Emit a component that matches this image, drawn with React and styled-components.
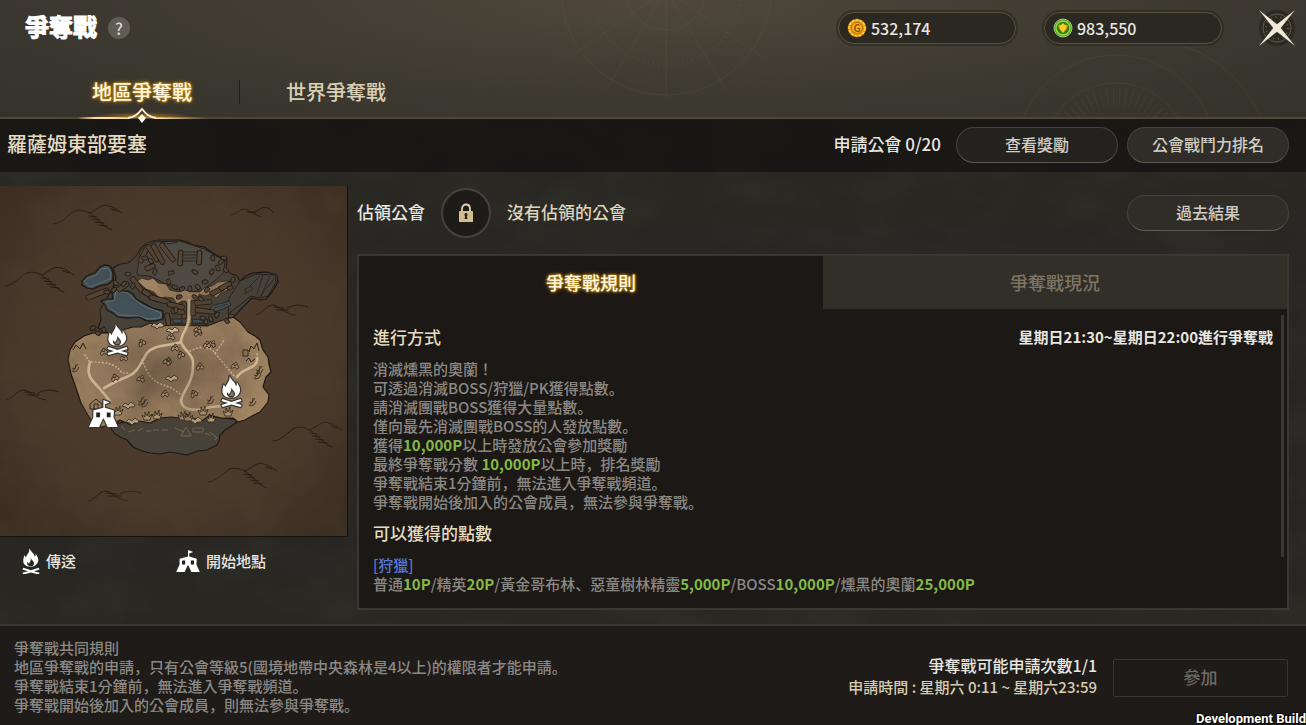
import React, { useState } from 'react';
import styled, { createGlobalStyle, css } from 'styled-components';

const GlobalStyle = createGlobalStyle`
    * {
        box-sizing: border-box;
    }

    body {
        margin: 0;
        background-color: #24231f;
        font-family: 'Noto Sans CJK KR', 'Noto Sans CJK JP', sans-serif;
        font-weight: 500;
        color: #e8e6e0;
    }

    button {
        font-family: inherit;
        font-weight: inherit;
        padding: 0;
        border: 0;
        background: none;
        cursor: pointer;
    }

    h1, h2, h3, p {
        margin: 0;
        font-weight: inherit;
    }
`

const Fire = () => (
    <>
        <path transform="scale(1 0.9)" fillRule="evenodd" d="M17 0C20 9 29 14 30 23C32 21 32 18 31 14C37 22 40 30 37 37C35 43 30 47 25 48L15 48C7 46 2 40 3 31C3 27 5 24 5 19C7 21 9 23 9 26C10 17 19 12 17 0ZM20 25C22 31 28 33 28 40C28 44 26 46 24 47L17 47C13 45 11 41 12 36C14 37 15 39 16 41C18 36 22 33 20 25Z" />
        <path d="M3 46L21 52L39 46L41 50L28 54L41 58L39 62L21 57L3 62L1 58L14 54L1 50Z" />
    </>
)

const Tent = () => (
    <>
        <path d="M30 0L43 5L33 9L33 16L52 22L51 36L60 56L39 56L31 39L29 39L21 56L0 56L9 36L9 22L30 16Z" />
        <path fill="#222" stroke="none" d="M15 26h8v10h-8zM37 26h8v10h-8z" />
    </>
)

const bigHill = 'M0 19C9 19 15 9 22 6C28 4 33 6 38 9C46 14 50 22 59 25M37 8C44 5 49 -2 56 1C61 2 64 5 69 8M36 11l8 1M39 14l8 1M42 17l9 1M46 20l8 1M58 4l6 2';
const flatHill = 'M0 11C7 9 10 1 17 1C23 2 27 9 39 11M31 4C37 1 44 0 52 3M18 3l10 1M20 6l12 0';

const hills = [
    { x: 53, y: 205, d: bigHill },
    { x: 5, y: 267, d: bigHill },
    { x: 273, y: 422, d: bigHill },
    { x: 208, y: 463, d: bigHill },
    { x: 231, y: 207, d: 'M0 8C6 7 8 2 14 2C19 4 23 7 30 10M24 5C30 2 34 -4 42 5M16 5l9 0' },
    { x: 256, y: 304, d: flatHill },
    { x: 7, y: 389, d: flatHill },
    { x: 89, y: 490, d: flatHill },
];

// loose stones over the plain
const stones = [
    [142, 343], [171, 337], [198, 333], [212, 344], [175, 348], [181, 355], [168, 361],
    [200, 367], [167, 362], [124, 358], [115, 378], [141, 379], [165, 394], [194, 394],
    [235, 366], [104, 352], [198, 330], [207, 345],
];
const paleStones = [[172, 378], [129, 405], [158, 325], [173, 330], [196, 420], [133, 421]];

// broken walls of the fortress: x, y, length, angle
const walls = [
    [140, 262, 18, -65], [148, 246, 18, 55], [153, 245, 21, 60], [161, 244, 21, 52], [146, 269, 9, -25],
    [180, 265, 14, -88], [199, 264, 13, -88], [132, 278, 17, 52], [143, 291, 18, 30],
    [150, 297, 20, 15], [87, 298, 22, -22], [118, 290, 12, -35], [184, 318, 16, -90],
    [193, 315, 14, -90], [195, 303, 16, -5], [168, 304, 16, 12], [167, 314, 11, 80],
    [211, 294, 14, -28], [220, 289, 12, -30], [172, 311, 12, 5], [196, 310, 18, 6],
];

const rubble = [
    [145, 258], [151, 261], [155, 272], [171, 273], [195, 272], [213, 258], [221, 262], [224, 258],
    [218, 268], [212, 272], [205, 282], [198, 287], [190, 289], [182, 289], [175, 287], [169, 282],
    [124, 284], [128, 274], [116, 283], [133, 286], [179, 297], [201, 299], [176, 310], [207, 290],
    [203, 318], [211, 319], [217, 315], [231, 316], [227, 321], [206, 322], [93, 328], [98, 333],
    [104, 330], [114, 290], [107, 292], [226, 270], [233, 280], [230, 288], [195, 297],
];

const tufts = [[147, 417], [157, 416], [183, 417], [188, 418], [203, 412], [211, 419], [228, 413], [118, 412]];
const darkTufts = [[141, 401], [75, 368], [252, 402], [257, 375], [210, 400], [144, 403], [259, 370]];

const TerritoryMap = () => (
    <MapSvg viewBox="0 186 348 351" role="img" aria-label="羅薩姆東部要塞">
        <defs>
            <radialGradient id="parchment" cx="50%" cy="48%" r="72%">
                <stop offset="0" stopColor="#503e2f" />
                <stop offset="0.6" stopColor="#49392b" />
                <stop offset="1" stopColor="#382b20" />
            </radialGradient>
            <radialGradient id="plain" cx="48%" cy="45%" r="62%">
                <stop offset="0" stopColor="#7c6650" />
                <stop offset="0.5" stopColor="#91775b" />
                <stop offset="1" stopColor="#a38762" />
            </radialGradient>
            <filter id="stain" x="0" y="0" width="100%" height="100%">
                <feTurbulence type="fractalNoise" baseFrequency="0.025" numOctaves="5" seed="7" />
                <feColorMatrix values="0 0 0 0 0.08  0 0 0 0 0.05  0 0 0 0 0.03  0 1.6 0 0 -0.62" />
            </filter>
        </defs>
        <rect x="0" y="186" width="348" height="351" fill="url(#parchment)" />

        <g fill="none" stroke="#211710" strokeWidth="0.9" strokeLinecap="round">
            {hills.map((hill, i) => <path key={i} d={hill.d} transform={`translate(${hill.x} ${hill.y})`} />)}
        </g>

        <g stroke="#1d1710" strokeWidth="1.2" strokeLinejoin="round">
            <path fill="#46423a" d="M98 328L101 320L100 310L108 296L113 288L116 278L113 268L120 264L128 263L133 259L137 255L140 249L147 243L153 241L160 240L180 240L187 242L193 245L204 247L213 253L220 257L227 261L226 268L230 273L237 276L240 281L246 276L253 273L267 272L277 275L278 282L272 292L266 299L260 300L252 298L246 304L240 310L233 318L220 328L110 334Z" />
            <path fill="#4f4c45" strokeWidth="0.8" d="M137 275L140 251L153 242L180 241L204 249L225 261L223 273L212 283L200 291L183 292L164 283L150 276Z" />
            <path fill="#46423a" strokeWidth="0.8" d="M240 281L256 274L275 275L276 282L268 296L260 298L251 296L240 305L228 314L229 298Z" />
            <path fill="#46423a" d="M109 425L114 433L120 437L127 440L133 447L142 451L150 453L160 454L170 452L187 455L198 451L207 450L217 445L219 441L220 435L225 430L233 425L239 420L180 412Z" />
            <path fill="url(#plain)" d="M68 360L70 350L75 342L84 336L93 333L110 333L122 330L133 327L141 327L150 323L162 326L173 325L207 326L220 321L233 317L240 322L248 332L255 336L260 340L263 350L268 357L269 364L271 372L266 377L263 387L269 395L268 402L260 412L252 416L245 420L238 422L233 418L221 418L210 415L202 421L193 418L180 418L171 417L160 418L150 423L140 421L131 425L120 420L111 425L101 427L91 420L86 412L81 403L76 388L71 374Z" />
        </g>

        <path fill="#a08462" stroke="#2b2118" strokeWidth="0.7" d="M137 281L142 278L148 280L153 278L158 283L166 284L170 290L178 292L184 290L193 292L200 292L204 288L212 286L218 282L227 281L230 285L228 290L221 293L216 298L211 294L205 296L199 294L198 300L192 301L191 326L186 326L187 303L182 301L177 304L173 298L165 297L160 299L154 292L146 289Z" />

        <g fill="#42525b" stroke="#1d1a15" strokeWidth="1.6" strokeLinejoin="round">
            <path d="M82 281L87 276L95 273L100 267L105 265L110 266L113 272L113 280L108 284L99 286L93 289L87 288L82 285Z" />
            <path d="M114 288L120 291L128 291L133 294L136 299L143 303L152 308L163 311L163 319L155 321L147 321L139 317L128 318L118 317L113 313L107 310L105 305L101 301L107 299L113 299L112 293Z" />
            <path d="M207 311L214 305L223 303L229 301L231 305L223 309L214 312ZM172 319L181 319L182 323L174 323ZM192 319L201 320L205 323L193 323Z" strokeWidth="0.8" />
        </g>
        <g fill="none" stroke="#71828a" strokeWidth="0.7">
            <path d="M84 281L88 278L96 275L101 269L108 268L111 273L110 279L98 284L90 287Z" />
            <path d="M116 291L127 293L133 298L142 305L161 313L160 318L148 319L139 316L119 315L110 308L106 302L114 301Z" />
        </g>

        <g fill="#554535" stroke="#1e160e" strokeWidth="0.9">
            {walls.map(([x, y, len, angle], i) => (
                <path key={i} transform={`translate(${x} ${y}) rotate(${angle})`} d={`M0 -2.5L${len} -2l1 2l-1 2.5L0 2.5l-1 -3Z`} />
            ))}
        </g>
        <g fill="#51483c" stroke="#1e160e" strokeWidth="0.9">
            {rubble.map(([x, y], i) => (
                <path key={i} transform={`translate(${x} ${y}) rotate(${(i * 53) % 180})`} d="M-3 -1L0 -2L3 -1L2 2L-1 2L-3 1Z" />
            ))}
        </g>
        <g fill="none" stroke="#262019" strokeWidth="0.8">
            <path d="M250 286L260 276M257 294L263 275M261 296L270 276M245 289l6 -3l2 3l-8 5zM259 298L274 279M160 241l8 3l10 -2M183 252h14M182 255h16M184 258h12M183 261h13M173 324h33M214 308l14 -4" />
            <path d="M128 432l7 -2M138 431l5 -3M146 431h5M153 430h6M162 430h6M175 428l9 4M193 428h10v4h-10zM181 436l5 -9l5 9zM210 432l7 6l-3 2M125 430l-3 -4M205 433l5 2" stroke="#85755f" />
            <path d="M90 409v-5l6 -5l6 5v5zM94 409v-5h4v5M243 356h5v-6h-5zM249 352l2 -6l3 3l3 -6l2 8M73 350l3 -5l4 4l3 -6l3 6M246 361l3 -3l2 4l4 -3" strokeWidth="1" />
        </g>

        <g fill="none" stroke="#cdb594" strokeWidth="2.6" strokeLinecap="round" strokeLinejoin="round">
            <path d="M189 300V317C189 328 181 333 181 342C184 351 193 354 193 362C194 384 182 391 181 401C182 412 200 411 211 407L223 406" />
            <path d="M181 342C166 347 155 344 147 353L140 365C135 376 125 377 115 382L104 388M90 362C85 377 94 382 100 389L110 401" />
            <path d="M237 377C243 367 259 369 257 358" />
            <g strokeWidth="1.6" strokeDasharray="0.5 3">
                <path d="M142 360C149 376 151 382 170 387L182 395M85 355L90 362C108 362 116 364 122 373L130 373M190 351C202 345 211 347 215 353L235 377M215 353L225 339M257 358V354" />
            </g>
        </g>

        <g fill="#a58d6e" stroke="#2a1f14" strokeWidth="0.8">
            {stones.map(([x, y], i) => (
                <path key={i} transform={`translate(${x} ${y}) rotate(${(i * 37) % 60 - 30})`} d="M-4 1L-2 -2L0 0L2 -2L4 1L2 3L0 1L-3 3ZM-1 -2L0 -4L2 -3" />
            ))}
        </g>
        <g fill="#c9b594" stroke="#3a2c1e" strokeWidth="0.9">
            {paleStones.map(([x, y], i) => (
                <path key={i} transform={`translate(${x} ${y})`} d="M-7 1L-4 -2L-1 0L2 -3L6 0L5 2L1 2L-1 4L-3 2Z" />
            ))}
        </g>
        <g fill="#b39a75" stroke="#2a1f14" strokeWidth="0.8">
            {tufts.map(([x, y], i) => (
                <path key={i} transform={`translate(${x} ${y})`} d="M-3 3L-5 -2L-2 0L-2 -5L0 -1L2 -6L2 0L5 -3L3 3Z" />
            ))}
        </g>
        <g fill="none" stroke="#3a2c1e" strokeWidth="0.9">
            {darkTufts.map(([x, y], i) => (
                <path key={i} transform={`translate(${x} ${y})`} d="M-3 4L3 -4M-3 0L0 1L1 -4M-2 4L2 3L4 -1" />
            ))}
        </g>

        <rect x="0" y="186" width="348" height="351" filter="url(#stain)" opacity="0.5" />
        <path d="M347.5 186V536.5H0" fill="none" stroke="#15110d" />

        <g fill="#fff" stroke="#3b3833" strokeWidth="5" strokeLinejoin="round" paintOrder="stroke">
            <g transform="translate(107 324) scale(0.5)"><Fire /></g>
            <g transform="translate(221 376) scale(0.5)"><Fire /></g>
            <g transform="translate(89 400) scale(0.48)"><Tent /></g>
        </g>
    </MapSvg>
)

const BackgroundArt = () => (
    <ArtSvg aria-hidden="true">
        <defs>
            <filter id="stone" x="0" y="0" width="100%" height="100%">
                <feTurbulence type="fractalNoise" baseFrequency="0.014 0.022" numOctaves="5" seed="3" />
                <feColorMatrix values="0 0 0 0 0.05  0 0 0 0 0.05  0 0 0 0 0.04  0 1.4 0 0 -0.55" />
            </filter>
        </defs>
        <rect width="100%" height="100%" filter="url(#stone)" opacity="0.35" />
    </ArtSvg>
)

const Dial = () => (
    <DialSvg viewBox="0 0 760 118" aria-hidden="true">
        <g fill="none" stroke="#7d704c" strokeOpacity="0.14">
            <circle cx="120" cy="-10" r="40" />
            <circle cx="120" cy="-10" r="75" strokeDasharray="1 4" strokeWidth="4" />
            <circle cx="120" cy="-10" r="105" />
            <path d="M120 -10L20 60M120 -10L60 90M120 -10L120 100M120 -10L180 90M120 -10L220 60" />
            <circle cx="570" cy="155" r="100" />
            <circle cx="570" cy="155" r="72" />
            <circle cx="570" cy="155" r="58" strokeDasharray="1 5" strokeWidth="18" />
            <path d="M620 42C670 50 700 85 715 118" />
        </g>
    </DialSvg>
)

const GoldCoin = () => (
    <Icon $w={20} viewBox="0 0 20 20" aria-hidden="true">
        <circle cx="10" cy="10" r="9" fill="#e59a12" stroke="#a95f05" />
        <circle cx="10" cy="10" r="8" fill="none" stroke="#ffd84f" strokeWidth="1.5" strokeDasharray="3 1" />
        <circle cx="10" cy="10" r="5.5" fill="#f7b522" stroke="#b86a08" />
        <text x="10" y="14" textAnchor="middle" fontSize="10" fontWeight="700" fill="#8f5104">G</text>
    </Icon>
)

const GuildCoin = () => (
    <Icon $w={20} viewBox="0 0 20 20" aria-hidden="true">
        <circle cx="10" cy="10" r="9" fill="#4b9a1d" stroke="#a9c98a" />
        <circle cx="10" cy="10" r="7" fill="none" stroke="#8fdc3b" strokeWidth="1.5" />
        <circle cx="10" cy="10" r="6" fill="#357c14" />
        <path d="M5.500 7L8 7L10 5L12 7L14.500 7L13.500 11L10 15L6.500 11Z" fill="#ffc928" stroke="#b98a0c" strokeWidth="0.6" />
    </Icon>
)

const tabs = ['地區爭奪戰', '世界爭奪戰'];

const commonRules = [
    '爭奪戰共同規則',
    '地區爭奪戰的申請，只有公會等級5(國境地帶中央森林是4以上)的權限者才能申請。',
    '爭奪戰結束1分鐘前，無法進入爭奪戰頻道。',
    '爭奪戰開始後加入的公會成員，則無法參與爭奪戰。',
];

const App = () => {

    const [tab, setTab] = useState(0);

    return (
        <Page>
            <GlobalStyle />
            <BackgroundArt />

            <Header>
                <Dial />
                <TopRow>
                    <Title>爭奪戰</Title>
                    <HelpBtn aria-label="說明">?</HelpBtn>
                    <Wallet>
                        <Currency><GoldCoin />532,174</Currency>
                        <Currency><GuildCoin />983,550</Currency>
                    </Wallet>
                    <CloseBtn aria-label="關閉">
                        <Icon $w={38} viewBox="0 0 38 38">
                            <circle cx="19" cy="19" r="18" fill="#2b2922" />
                            <circle cx="19" cy="19" r="14" fill="none" stroke="#6d6754" strokeWidth="0.8" />
                            <circle cx="19" cy="19" r="11" fill="none" stroke="#6d6754" strokeWidth="1.5" strokeDasharray="1 4" />
                            <path fill="#f1ead6" stroke="#1b1914" strokeWidth="0.4" d="M0 0L19 15L38 0L23 19L38 38L19 23L0 38L15 19Z" />
                        </Icon>
                    </CloseBtn>
                </TopRow>
                <Tabs>
                    {tabs.map((name, i) => (
                        <Tab key={name} $active={tab === i} onClick={() => setTab(i)}>
                            {name}
                            {tab === i &&
                                <TabMark viewBox="0 0 130 20" aria-hidden="true">
                                    <defs>
                                        <linearGradient id="beam">
                                            <stop offset="0" stopColor="#ffce73" stopOpacity="0" />
                                            <stop offset="0.35" stopColor="#ffe3a8" />
                                            <stop offset="0.65" stopColor="#ffe3a8" />
                                            <stop offset="1" stopColor="#ffce73" stopOpacity="0" />
                                        </linearGradient>
                                        <radialGradient id="glow" cx="50%" cy="100%" r="50%" fy="100%">
                                            <stop offset="0" stopColor="#d08a20" stopOpacity="0.9" />
                                            <stop offset="1" stopColor="#c98214" stopOpacity="0" />
                                        </radialGradient>
                                    </defs>
                                    <rect x="10" y="2" width="110" height="12" fill="url(#glow)" />
                                    <rect x="0" y="13" width="52" height="2" fill="url(#beam)" />
                                    <path d="M0 13.500H52V15H0ZM78 13.500H130V15H78Z" fill="url(#beam)" />
                                    <path d="M51 14C58 13 61 10 65 5C69 10 72 13 79 14" fill="none" stroke="#fff3cf" strokeWidth="2" />
                                    <path d="M65 10L69 14L65 19L61 14Z" fill="#fffbe8" />
                                </TabMark>
                            }
                        </Tab>
                    ))}
                </Tabs>
            </Header>

            <PlaceBar>
                <PlaceName>羅薩姆東部要塞</PlaceName>
                <Applied>申請公會 0/20</Applied>
                <PillBtn>查看獎勵</PillBtn>
                <PillBtn $raised>公會戰鬥力排名</PillBtn>
            </PlaceBar>

            <Main>
                <MapColumn>
                    <TerritoryMap />
                    <Legend>
                        <LegendItem>
                            <Icon $w={18} viewBox="0 0 42 62" fill="#fff"><Fire /></Icon>
                            傳送
                        </LegendItem>
                        <LegendItem>
                            <Icon $w={24} viewBox="0 0 60 56" fill="#fff"><Tent /></Icon>
                            開始地點
                        </LegendItem>
                    </Legend>
                </MapColumn>

                <Detail>
                    <OwnerRow>
                        <OwnerLabel>佔領公會</OwnerLabel>
                        <Emblem>
                            <Icon $w={16} viewBox="0 0 16 20" aria-hidden="true">
                                <path d="M4 9V6C4 0 12 0 12 6V9" fill="none" stroke="#e6d5ae" strokeWidth="1.8" />
                                <rect x="1" y="8" width="14" height="11" rx="0.5" fill="#d3be91" />
                                <path d="M8 10a1.700 1.700 0 0 1 1 3l.4 3h-2.800l.4-3a1.700 1.700 0 0 1 1-3" fill="#2a231a" />
                            </Icon>
                        </Emblem>
                        <OwnerName>沒有佔領的公會</OwnerName>
                        <PillBtn $raised>過去結果</PillBtn>
                    </OwnerRow>

                    <Panel>
                        <PanelTabs>
                            <PanelTab $active>爭奪戰規則</PanelTab>
                            <PanelTab>爭奪戰現況</PanelTab>
                        </PanelTabs>
                        <PanelBody>
                            <Rules>
                                <RuleHead>
                                    <RuleTitle>進行方式</RuleTitle>
                                    <Schedule>星期日21:30~星期日22:00進行爭奪戰</Schedule>
                                </RuleHead>
                                <RuleText>
                                    <p>消滅燻黑的奧蘭！</p>
                                    <p>可透過消滅BOSS/狩獵/PK獲得點數。</p>
                                    <p>請消滅團戰BOSS獲得大量點數。</p>
                                    <p>僅向最先消滅團戰BOSS的人發放點數。</p>
                                    <p>獲得<Points>10,000P</Points>以上時發放公會參加獎勵</p>
                                    <p>最終爭奪戰分數 <Points>10,000P</Points>以上時，排名獎勵</p>
                                    <p>爭奪戰結束1分鐘前，無法進入爭奪戰頻道。</p>
                                    <p>爭奪戰開始後加入的公會成員，無法參與爭奪戰。</p>
                                </RuleText>
                                <RuleHead>
                                    <RuleTitle>可以獲得的點數</RuleTitle>
                                </RuleHead>
                                <RuleText>
                                    <Category>[狩獵]</Category>
                                    <p>
                                        普通<Points>10P</Points>/精英<Points>20P</Points>/黃金哥布林、惡童樹林精靈<Points>5,000P</Points>/BOSS<Points>10,000P</Points>/燻黑的奧蘭<Points>25,000P</Points>
                                    </p>
                                </RuleText>
                            </Rules>
                            <ScrollTrack />
                        </PanelBody>
                    </Panel>
                </Detail>
            </Main>

            <Footer>
                <CommonRules>
                    {commonRules.map((rule) => <p key={rule}>{rule}</p>)}
                </CommonRules>
                <ApplyInfo>
                    <ApplyCount>爭奪戰可能申請次數1/1</ApplyCount>
                    <ApplyTime>申請時間 : 星期六 0:11 ~ 星期六23:59</ApplyTime>
                </ApplyInfo>
                <JoinBtn disabled>參加</JoinBtn>
            </Footer>

            <BuildTag>Development Build</BuildTag>
        </Page>
    )
}

export default App;


const glowText = css`
    color: #fff6dc;
    text-shadow: 0 0 2px #c08a1c, 0 0 3px #c08a1c, 0 0 5px #a87413;
`

const Page = styled.div`
    position: relative;
    display: flex;
    flex-direction: column;
    min-height: 100vh;
    background: linear-gradient(#292823, #272622 60%, #2a2823);
`

const ArtSvg = styled.svg`
    position: absolute;
    inset: 0;
    width: 100%;
    height: 100%;
    pointer-events: none;
`

const DialSvg = styled.svg`
    position: absolute;
    right: 0;
    top: 0;
    width: 760px;
    height: 118px;
    pointer-events: none;
`

const Icon = styled.svg`
    flex: none;
    display: block;
    width: ${(props) => props.$w}px;
`

const Header = styled.header`
    position: relative;
    z-index: 1;
    background: radial-gradient(ellipse at 50% 0, rgba(82, 75, 62, 0.9), rgba(64, 60, 50, 0.9) 55%, rgba(54, 51, 43, 0.9));
    border-bottom: 2px solid #4d4838;
`

const TopRow = styled.div`
    position: relative;
    display: flex;
    align-items: center;
    height: 56px;
    padding: 0 10px 0 25px;
`

const Title = styled.h1`
    font-size: 24px;
    line-height: 52px;
    font-weight: 700;
    color: #fff;
    align-self: flex-start;
    -webkit-text-stroke: 1px #fff;
`

const HelpBtn = styled.button`
    width: 22px;
    height: 22px;
    margin-left: 11px;
    border-radius: 50%;
    background-color: #5f5c53;
    color: #d8d6cf;
    font-size: 16px;
    line-height: 22px;
`

const Wallet = styled.div`
    display: flex;
    gap: 28px;
    margin-left: auto;
`

const Currency = styled.div`
    display: flex;
    align-items: center;
    gap: 4px;
    width: 178px;
    height: 32px;
    padding-left: 8px;
    border: 1px solid #5b523c;
    border-radius: 16px;
    background-color: #2b2821;
    box-shadow: 0 0 0 2px rgba(36, 33, 26, 0.5);
    font-size: 16px;
`

const CloseBtn = styled.button`
    margin-left: 36px;
`

const Tabs = styled.nav`
    position: relative;
    display: flex;
    height: 61px;
    padding-left: 45px;
`

const Tab = styled.button`
    position: relative;
    width: 194px;
    padding-top: 9px;
    font-size: 20px;
    color: #d9d0b6;

    & + & {
        background: linear-gradient(#1e1c17, #1e1c17) 0 24px / 1px 24px no-repeat;
    }

    ${(props) => props.$active && glowText}
`

const TabMark = styled.svg`
    position: absolute;
    left: 32px;
    bottom: -7px;
    width: 130px;
    height: 20px;
`

const PlaceBar = styled.div`
    position: relative;
    display: flex;
    align-items: center;
    gap: 9px;
    height: 53px;
    padding: 0 17px 2px 7px;
    background-color: rgba(23, 22, 20, 0.9);
`

const PlaceName = styled.h2`
    margin-right: auto;
    padding-bottom: 2px;
    font-size: 20px;
    color: #e3dac0;
`

const Applied = styled.span`
    margin-right: 6px;
    padding-bottom: 2px;
    font-size: 17px;
`

const PillBtn = styled.button`
    width: 162px;
    height: 36px;
    padding-bottom: 2px;
    border: 1px solid #45423b;
    border-bottom-color: #5d5a51;
    border-radius: 18px;
    background-color: ${(props) => props.$raised ? '#302d28' : '#24221e'};
    color: #cfcdc6;
    font-size: 16px;
`

const Main = styled.main`
    position: relative;
    display: flex;
    gap: 9px;
    flex: 1;
    padding: 14px 17px 14px 0;
`

const MapColumn = styled.section`
    flex: 0 0 348px;
`

const MapSvg = styled.svg`
    display: block;
    width: 100%;
`

const Legend = styled.div`
    display: grid;
    grid-template-columns: 154px 1fr;
    padding: 9px 0 0 22px;
`

const LegendItem = styled.div`
    display: flex;
    align-items: center;
    gap: 6px;
    height: 30px;
    font-size: 15px;
    line-height: 20px;
`

const Detail = styled.section`
    flex: 1;
    min-width: 0;
    display: flex;
    flex-direction: column;
    gap: 14px;
`

const OwnerRow = styled.div`
    display: flex;
    align-items: center;
    gap: 16px;
    height: 54px;
    font-size: 17px;
`

const OwnerLabel = styled.span`
    padding-bottom: 4px;
`

const Emblem = styled.div`
    display: flex;
    align-items: center;
    justify-content: center;
    width: 50px;
    height: 50px;
    border: 2px solid #45433d;
    border-radius: 50%;
    background-color: #1e1c19;
`

const OwnerName = styled(OwnerLabel)`
    margin-right: auto;
    color: #ddd4bb;
`

const Panel = styled.div`
    flex: 1;
    display: flex;
    flex-direction: column;
    border: 2px solid #3a3832;
    background-color: #1c1815;
`

const PanelTabs = styled.div`
    display: flex;
    height: 53px;
`

const PanelTab = styled.button`
    flex: 1;
    padding-bottom: 2px;
    font-size: 18px;
    color: #7d7564;
    background-color: #322e28;

    ${(props) => props.$active && css`
        background-color: transparent;
        ${glowText}
    `}
`

const PanelBody = styled.div`
    flex: 1;
    display: flex;
    padding: 0 3px 0 14px;
`

const Rules = styled.div`
    flex: 1;
    padding: 6px 8px 14px 0;
`

const RuleHead = styled.div`
    display: flex;
    align-items: center;
    justify-content: space-between;
    height: 26px;
    margin: 8px 0 10px;
`

const RuleTitle = styled.h3`
    font-size: 17px;
    color: #e6dcc0;
`

const Schedule = styled.span`
    font-size: 15px;
    font-weight: 700;
`

const RuleText = styled.div`
    font-size: 15px;
    line-height: 19px;
    color: #8b8884;
`

const Points = styled.span`
    font-weight: 700;
    color: #84b847;
`

const Category = styled.p`
    color: #5578d8;
`

const ScrollTrack = styled.div`
    width: 3px;
    height: 242px;
    margin-top: 6px;
    background-color: #3b3834;
`

const Footer = styled.footer`
    position: relative;
    display: flex;
    align-items: center;
    gap: 16px;
    padding: 12px 18px 7px 14px;
    border-top: 2px solid #393731;
    background-color: #1e1b18;
`

const CommonRules = styled.div`
    margin-right: auto;
    padding-bottom: 4px;
    font-size: 15px;
    line-height: 19px;
    color: #8b8884;
`

const ApplyInfo = styled.div`
    padding-bottom: 4px;
    text-align: right;
    line-height: 22px;
`

const ApplyCount = styled.p`
    font-size: 16px;
`

const ApplyTime = styled.p`
    font-size: 15px;
    color: #d6cdb2;
`

const JoinBtn = styled.button`
    width: 175px;
    height: 38px;
    padding-bottom: 4px;
    border: 1px solid #3c362c;
    border-radius: 2px;
    color: #6f6c66;
    font-size: 17px;
    cursor: default;
`

const BuildTag = styled.div`
    position: absolute;
    right: 0;
    bottom: 0;
    font-family: Roboto, sans-serif;
    font-size: 13px;
    line-height: 12px;
    font-weight: 700;
    color: #fff;
    text-shadow: 1px 1px 0 #000, -1px -1px 0 #000;
`
